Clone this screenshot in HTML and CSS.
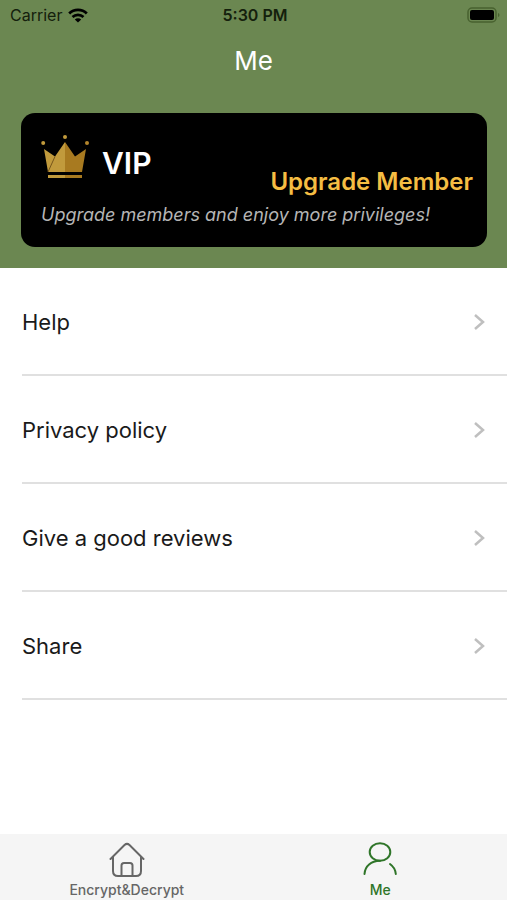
FILE: index.html
```html
<!DOCTYPE html>
<html lang="en">
<head>
    <meta charset="UTF-8">
    <meta name="viewport" content="width=device-width, initial-scale=1.0">
    <title>Me</title>
    <link rel="stylesheet" href="styles.css">
</head>
<body>

<header class="header">
    <div class="status-bar">
        <div class="carrier">
            <span>Carrier</span>
            <svg class="wifi" viewBox="0 0 20 15" aria-hidden="true">
                <path d="M1.2 5.4C6 .8 14 .8 18.8 5.4" fill="none" stroke="currentColor" stroke-width="2.8"/>
                <path d="M4.5 9C7.5 6.1 12.5 6.1 15.5 9" fill="none" stroke="currentColor" stroke-width="2.6"/>
                <path d="M10 14.5L6.8 11.5C8.5 9.9 11.5 9.9 13.2 11.5Z" fill="currentColor"/>
            </svg>
        </div>
        <span class="time">5:30 PM</span>
        <svg class="battery" viewBox="0 0 33 16" aria-hidden="true">
            <rect x="1" y="1" width="28" height="14" rx="4" fill="none" stroke="#48622f" stroke-width="1.5"/>
            <rect x="3" y="3" width="24" height="10" rx="2" fill="#000"/>
            <path d="M31 6v4c2-.8 2-3.2 0-4z" fill="#48622f"/>
        </svg>
    </div>
    <h1>Me</h1>
    <section class="vip-card">
        <div class="vip-top">
            <svg class="crown" viewBox="0 0 48 44" aria-hidden="true">
                <path d="M3 10L14 17.5L24 3V33H7z" fill="#c19a3c"/>
                <path d="M24 3L34 17.5L45 10L41 33H24z" fill="#a87a20"/>
                <path d="M14 17.5L7 33" stroke="#76551b" stroke-width="1"/>
                <path d="M7 36h17v3H7z" fill="#c19a3c"/>
                <path d="M24 36h17v3H24z" fill="#a87a20"/>
                <circle cx="2.2" cy="4" r="2" fill="#c19a3c"/>
                <circle cx="24" cy="-2" r="2" fill="#c19a3c"/>
                <circle cx="46" cy="4" r="2" fill="#b3852c"/>
            </svg>
            <h2>VIP</h2>
            <button class="upgrade" type="button">Upgrade Member</button>
        </div>
        <p>Upgrade members and enjoy more privileges!</p>
    </section>
</header>

<main class="menu">
    <a class="menu-item" href="#help">Help
        <svg class="chevron" viewBox="0 0 12 18" aria-hidden="true"><path d="M2 2l8 7-8 7"/></svg>
    </a>
    <a class="menu-item" href="#privacy">Privacy policy
        <svg class="chevron" viewBox="0 0 12 18" aria-hidden="true"><path d="M2 2l8 7-8 7"/></svg>
    </a>
    <a class="menu-item" href="#reviews">Give a good reviews
        <svg class="chevron" viewBox="0 0 12 18" aria-hidden="true"><path d="M2 2l8 7-8 7"/></svg>
    </a>
    <a class="menu-item" href="#share">Share
        <svg class="chevron" viewBox="0 0 12 18" aria-hidden="true"><path d="M2 2l8 7-8 7"/></svg>
    </a>
</main>

<nav class="tab-bar">
    <a class="tab" href="#encrypt">
        <svg class="tab-icon" viewBox="0 0 36 36" aria-hidden="true">
            <path d="M1.5 17L15.5 3Q18 .8 20.5 3L34.5 17"/>
            <path d="M4 15V29Q4 34 9 34H27Q32 34 32 29V15"/>
            <path d="M12.5 34V23.5Q12.5 21 15 21H21Q23.5 21 23.5 23.5V34"/>
        </svg>
        <span>Encrypt&amp;Decrypt</span>
    </a>
    <a class="tab active" href="#me">
        <svg class="tab-icon" viewBox="0 0 36 36" aria-hidden="true">
            <ellipse cx="18" cy="10" rx="10.3" ry="8.8"/>
            <path d="M2.5 32C3 24 9 19 18 18.8"/>
            <path d="M28 22C31.5 24.5 33.5 28 33.8 32"/>
        </svg>
        <span>Me</span>
    </a>
</nav>

</body>
</html>
```
FILE: styles.css
```css
* {
    box-sizing: border-box;
}
body {
    display: flex;
    flex-direction: column;
    min-height: 100vh;
    margin: 0;
    font-family: Inter, "Liberation Sans", sans-serif;
    color: #1a1a1a;
    background-color: #fff;
}
h1, h2, p {
    margin: 0;
}
a {
    color: inherit;
    text-decoration: none;
}
.header {
    padding-bottom: 21px;
    background-color: #6b8751;
}
.status-bar {
    display: grid;
    grid-template-columns: 1fr auto 1fr;
    align-items: center;
    height: 30px;
    padding: 0 7px 0 10px;
    font-size: 16px;
    color: #14200c;
}
.carrier {
    display: flex;
    align-items: center;
    gap: 6px;
}
.wifi {
    width: 20px;
    height: 15px;
    color: #000;
}
.time {
    font-weight: 600;
}
.battery {
    justify-self: end;
    width: 33px;
    height: 16px;
}
h1 {
    padding: 15px 0 36px;
    font-size: 26px;
    font-weight: 400;
    line-height: 32px;
    text-align: center;
    color: #fff;
}
.vip-card {
    margin: 0 20px 0 21px;
    padding: 20px 14px 20px 20px;
    border-radius: 14px;
    background-color: #000;
}
.vip-top {
    display: flex;
    height: 68px;
}
.crown {
    width: 48px;
    height: 44px;
    margin-top: 6px;
    overflow: visible;
}
h2 {
    margin-left: 13px;
    font-size: 30px;
    font-weight: 600;
    line-height: 60px;
    color: #fff;
}
.upgrade {
    align-self: flex-end;
    height: 40px;
    margin-left: auto;
    padding: 0;
    border: none;
    font-family: inherit;
    font-size: 24px;
    font-weight: 600;
    color: #f5bd43;
    background: none;
    cursor: pointer;
}
.vip-card p {
    font-size: 18px;
    font-style: italic;
    line-height: 28px;
    height: 26px;
    color: #b5b5b5;
}
.menu {
    flex: 1;
    padding-left: 22px;
}
.menu-item {
    display: flex;
    align-items: center;
    justify-content: space-between;
    height: 108px;
    padding: 2px 22px 0 0;
    border-bottom: 2px solid #e0e0e0;
    font-size: 22px;
}
.chevron {
    width: 12px;
    height: 18px;
    fill: none;
    stroke: #bfbfbf;
    stroke-width: 2.5;
}
.tab-bar {
    display: flex;
    height: 66px;
    background-color: #f5f5f5;
}
.tab {
    display: flex;
    flex: 1;
    flex-direction: column;
    align-items: center;
    gap: 4px;
    padding-top: 8px;
    font-size: 14px;
    font-weight: 500;
    line-height: 16px;
    color: #666;
}
.tab-icon {
    width: 36px;
    height: 36px;
    fill: none;
    stroke: currentColor;
    stroke-width: 2;
    stroke-linecap: round;
}
.active {
    color: #2f7529;
}
```
